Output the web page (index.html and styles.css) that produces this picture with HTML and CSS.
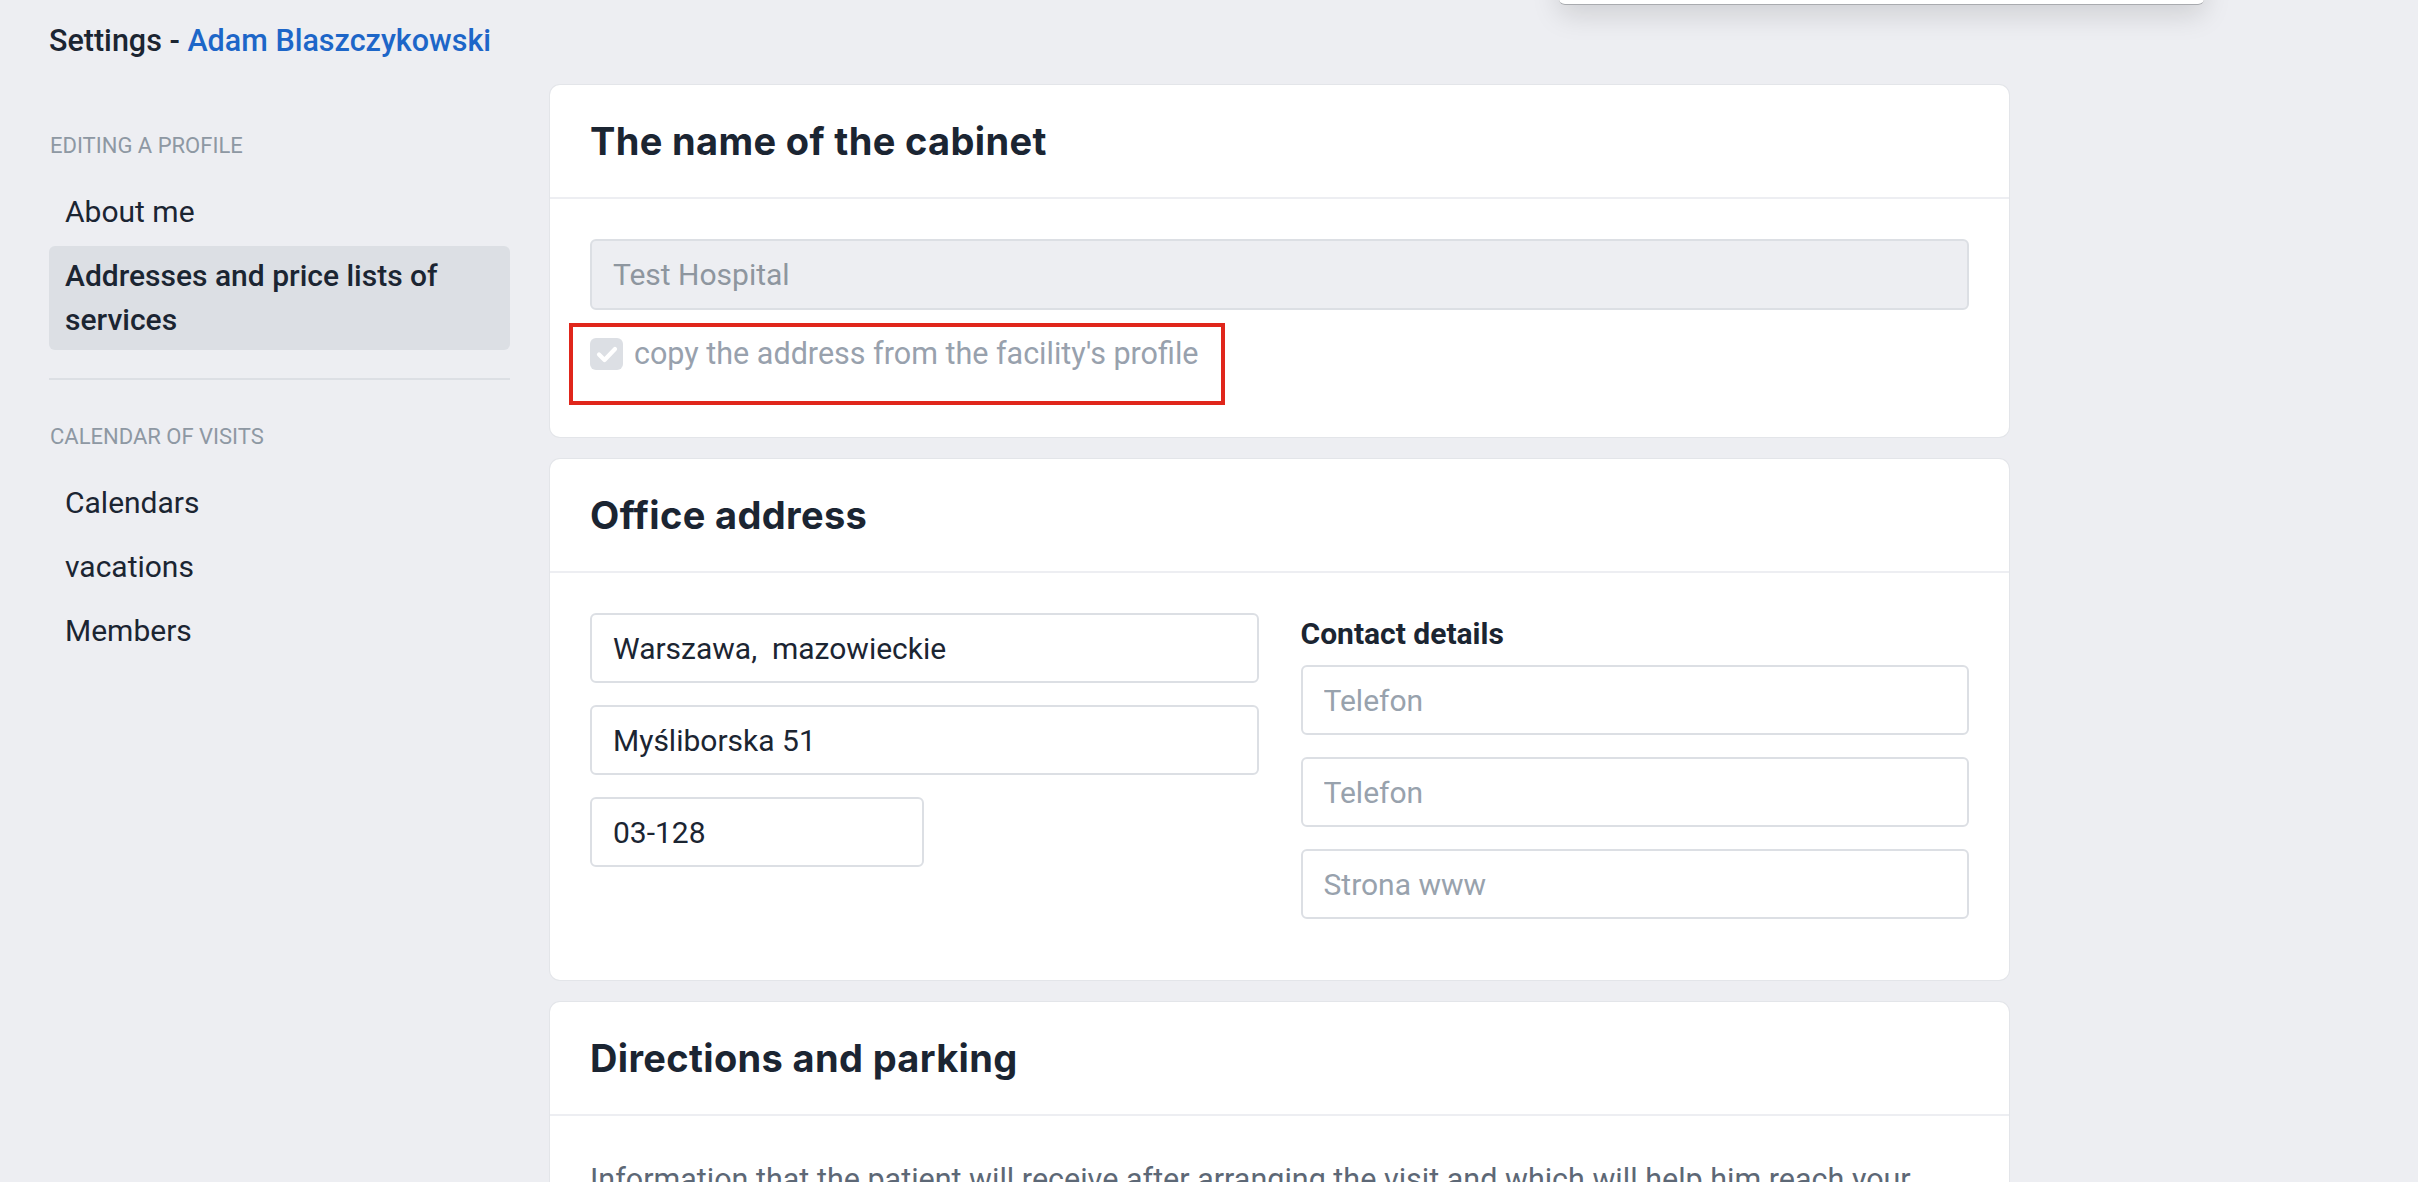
FILE: index.html
```html
<!DOCTYPE html>
<html lang="en">
<head>
<meta charset="utf-8">
<title>Settings - Adam Blaszczykowski</title>
<link rel="stylesheet" href="styles.css">
</head>
<body>
<div class="popover"></div>
<div class="page">
  <h1 class="page-title">Settings - <a class="user-link" href="#">Adam Blaszczykowski</a></h1>
  <div class="layout">
    <nav class="sidebar">
      <div class="nav-label">EDITING A PROFILE</div>
      <ul class="nav-list">
        <li class="nav-item">About me</li>
        <li class="nav-item active">Addresses and price lists of services</li>
      </ul>
      <hr class="nav-divider">
      <div class="nav-label">CALENDAR OF VISITS</div>
      <ul class="nav-list">
        <li class="nav-item">Calendars</li>
        <li class="nav-item">vacations</li>
        <li class="nav-item">Members</li>
      </ul>
    </nav>
    <main class="content">
      <section class="card">
        <header class="card-header"><h2 class="card-title">The name of the cabinet</h2></header>
        <div class="card-body card-body-name">
          <input class="field field-disabled" type="text" value="Test Hospital" disabled>
          <label class="check-row">
            <span class="checkbox">
              <svg viewBox="0 0 32 32" width="32" height="32"><path d="M8 16.5l5.5 5.5L24 11" fill="none" stroke="#ffffff" stroke-width="4.2" stroke-linecap="round" stroke-linejoin="round"/></svg>
            </span>
            <span class="check-text">copy the address from the facility's profile</span>
            <span class="annotation"></span>
          </label>
        </div>
      </section>
      <section class="card">
        <header class="card-header"><h2 class="card-title">Office address</h2></header>
        <div class="card-body card-body-address">
          <div class="field-col">
            <input class="field" type="text" value="Warszawa,  mazowieckie">
            <input class="field" type="text" value="Myśliborska 51">
            <input class="field field-short" type="text" value="03-128">
          </div>
          <div class="field-col">
            <div class="col-label">Contact details</div>
            <input class="field" type="text" placeholder="Telefon">
            <input class="field" type="text" placeholder="Telefon">
            <input class="field" type="text" placeholder="Strona www">
          </div>
        </div>
      </section>
      <section class="card">
        <header class="card-header"><h2 class="card-title">Directions and parking</h2></header>
        <div class="card-body card-body-text">
          <p class="card-text">Information that the patient will receive after arranging the visit and which will help him reach your office, e.g. entrance from the street, parking spaces.</p>
        </div>
      </section>
    </main>
  </div>
</div>
</body>
</html>
```
FILE: styles.css
```css
html, body {
  margin: 0;
  padding: 0;
  background: #edeef2;
  color: #1b2532;
  font-family: Roboto, "Liberation Sans", Arial, sans-serif;
}

body {
  height: 1182px;
  overflow: hidden;
  position: relative;
}

.popover {
  position: absolute;
  left: 1559px;
  top: -100px;
  width: 645px;
  height: 104px;
  background: #ffffff;
  border-radius: 0 0 6px 6px;
  border-bottom: 1px solid #a9abaf;
  box-shadow: 0 10px 28px rgba(0, 0, 0, 0.13);
  z-index: 5;
}

.page {
  padding: 20px 49px 0;
}

.page-title {
  margin: 0;
  font-size: 30.5px;
  font-weight: 500;
  line-height: 42px;
  color: #1b2532;
}

.user-link {
  color: #1d66c8;
  text-decoration: none;
}

.layout {
  display: flex;
  align-items: flex-start;
  gap: 40px;
  margin-top: 23px;
}

.sidebar {
  width: 461px;
  flex: none;
  padding-top: 49px;
}

.nav-label {
  font-size: 22px;
  line-height: 24px;
  color: #8e98a3;
  padding-left: 1px;
}

.nav-list {
  list-style: none;
  margin: 24px 0 0;
  padding: 0;
  display: flex;
  flex-direction: column;
  gap: 4px;
}

.nav-item {
  padding: 8px 16px;
  font-size: 30px;
  line-height: 44px;
  border-radius: 6px;
  color: #1b2532;
}

.nav-item.active {
  background: #dcdfe4;
  font-weight: 500;
}

.nav-divider {
  border: 0;
  height: 2px;
  background: #dcdfe4;
  margin: 28px 0 45px;
}

.content {
  flex: none;
  width: 1459px;
  display: flex;
  flex-direction: column;
  gap: 22px;
}

.card {
  background: #ffffff;
  border-radius: 10px;
  box-shadow: 0 0 0 1px #e3e5e9;
}

.card-header {
  height: 112px;
  display: flex;
  align-items: center;
  padding: 0 40px;
  border-bottom: 2px solid #edeef2;
}

.card-title {
  margin: 0;
  font-family: Inter, "Noto Sans", sans-serif;
  font-weight: 700;
  font-size: 38px;
  letter-spacing: 0.35px;
  color: #1b2532;
}

.card-body {
  padding: 40px 40px 61px;
}

.card-body-name {
  padding-bottom: 63px;
}

.field {
  display: block;
  box-sizing: border-box;
  width: 100%;
  height: 70px;
  margin: 0;
  padding: 0 21px;
  border: 2px solid #dcdfe4;
  border-radius: 6px;
  background: #ffffff;
  font-family: Roboto, "Liberation Sans", Arial, sans-serif;
  font-size: 30px;
  color: #1b2532;
  outline: none;
}

.field::placeholder {
  color: #98a2ad;
}

.field-disabled {
  height: 71px;
  background: #edeef2;
  color: #8e969f;
  -webkit-text-fill-color: #8e969f;
}

.field-short {
  width: 334px;
}

.check-row {
  position: relative;
  display: inline-flex;
  align-items: center;
  gap: 11px;
  margin-top: 28px;
  height: 32px;
}

.checkbox {
  width: 33px;
  height: 32px;
  border-radius: 6px;
  background: #dcdfe4;
  display: flex;
  align-items: center;
  justify-content: center;
}

.checkbox svg {
  display: block;
}

.check-text {
  font-size: 30.5px;
  color: #98a1ad;
  line-height: 32px;
}

.annotation {
  position: absolute;
  left: -21px;
  top: -15px;
  right: -26px;
  height: 82px;
  box-sizing: border-box;
  border: 4px solid #e0261b;
}

.card-body-address {
  display: grid;
  grid-template-columns: 1fr 1fr;
  column-gap: 42px;
  align-items: start;
}

.field-col {
  display: flex;
  flex-direction: column;
  gap: 22px;
}

.col-label {
  font-size: 30px;
  font-weight: 700;
  line-height: 34px;
  margin: 4px 0 -8px;
  color: #1b2532;
}

.card-text {
  margin: 7px 0 0;
  font-size: 30.5px;
  line-height: 34px;
  color: #5d6876;
}
```
